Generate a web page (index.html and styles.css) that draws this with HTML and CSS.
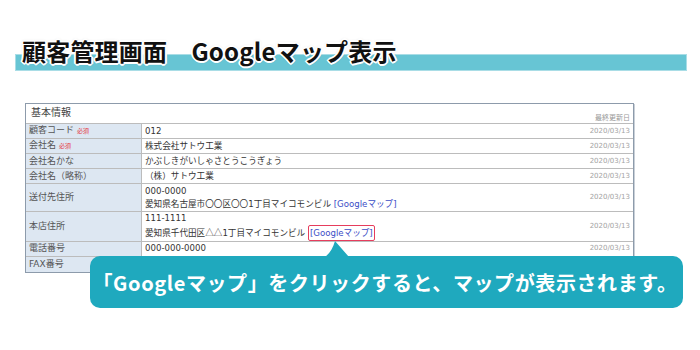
FILE: index.html
```html
<!DOCTYPE html>
<html lang="ja">
<head>
<meta charset="utf-8">
<title>顧客管理画面 Googleマップ表示</title>
<link rel="stylesheet" href="styles.css">
</head>
<body>

<h1 class="page-title">顧客管理画面　Googleマップ表示</h1>

<div class="panel">
  <table class="info">
    <tr class="head">
      <td colspan="3">
        <div class="head-inner">
          <span class="head-text">基本情報</span>
          <span class="head-date">最終更新日</span>
        </div>
      </td>
    </tr>
    <tr>
      <th>顧客コード <span class="req">必須</span></th>
      <td>012</td>
      <td class="date">2020/03/13</td>
    </tr>
    <tr>
      <th>会社名 <span class="req">必須</span></th>
      <td>株式会社サトウ工業</td>
      <td class="date">2020/03/13</td>
    </tr>
    <tr>
      <th>会社名かな</th>
      <td>かぶしきがいしゃさとうこうぎょう</td>
      <td class="date">2020/03/13</td>
    </tr>
    <tr>
      <th>会社名（略称）</th>
      <td>（株）サトウ工業</td>
      <td class="date">2020/03/13</td>
    </tr>
    <tr class="addr addr1">
      <th>送付先住所</th>
      <td>000-0000<br>愛知県名古屋市<span class="cjk">〇〇</span>区<span class="cjk">〇〇</span>1丁目マイコモンビル <a href="#">[Googleマップ]</a></td>
      <td class="date">2020/03/13</td>
    </tr>
    <tr class="addr addr2">
      <th>本店住所</th>
      <td>111-1111<br>愛知県千代田区<span class="cjk">△△</span>1丁目マイコモンビル <a href="#" class="marked">[Googleマップ]</a></td>
      <td class="date">2020/03/13</td>
    </tr>
    <tr>
      <th>電話番号</th>
      <td>000-000-0000</td>
      <td class="date">2020/03/13</td>
    </tr>
    <tr>
      <th>FAX番号</th>
      <td></td>
      <td class="date">2020/03/13</td>
    </tr>
  </table>
</div>

<div class="note">
  <svg class="note-tail" width="26" height="16" viewBox="0 0 26 16">
    <path d="M1 16 C6 12 9 7 11 0 L25 16 Z" fill="#1fa9be"/>
  </svg>
  <p>「Googleマップ」をクリックすると、マップが表示されます。</p>
</div>

</body>
</html>
```

FILE: styles.css
```css
body {
  margin: 0;
  padding-top: 34px;
  background-color: white;
  font-family: "DejaVu Sans", "Noto Sans CJK JP", sans-serif;
}

.page-title {
  margin: 0 13px 0 15px;
  padding-left: 7px;
  height: 37px;
  line-height: 34px;
  font-family: "Noto Sans CJK JP", sans-serif;
  font-size: 24px;
  font-weight: bold;
  color: #111;
  letter-spacing: 0.2px;
  background:
    linear-gradient(transparent 21px, #67c5d4 21px) 1px 0 / calc(100% - 2px) calc(100% - 1px) no-repeat,
    linear-gradient(transparent 20px, #a9dde6 20px);
  text-shadow:
    1px 1px 0 #fff, -1px -1px 0 #fff, 1px -1px 0 #fff, -1px 1px 0 #fff,
    2px 0 0 #fff, -2px 0 0 #fff, 0 2px 0 #fff, 0 -2px 0 #fff,
    0 0 3px rgba(0, 0, 0, 0.35);
}

.panel {
  margin: 32px 0 0 25px;
  width: 607px;
  border: 1px solid #8d9bab;
  box-shadow: 1px 1px 0 #c9d0d8;
}

.info {
  width: 100%;
  border-collapse: collapse;
  font-size: 8.6px;
  color: #333;
}
.info th, .info td {
  padding: 0 3px;
  height: 14px;
  line-height: 12.5px;
  border-bottom: 1px solid #bcbcbc;
  vertical-align: middle;
}
.info tr:last-child th, .info tr:last-child td { border-bottom: none; height: 15px; }
.info th {
  width: 109px;
  text-align: left;
  font-weight: normal;
  font-size: 9px;
  color: #555;
  background-color: #dde7f2;
  border-right: 1px solid #bcbcbc;
}
.info td.date {
  text-align: right;
  font-size: 7px;
  color: #a3a3a3;
  width: 60px;
}
.req {
  font-size: 6px;
  color: #e5333f;
}
.cjk {
  font-family: "Noto Sans CJK JP", sans-serif;
}

.info tr.head td {
  height: 19px;
  padding: 0;
}
.head-inner {
  display: flex;
  justify-content: space-between;
  align-items: flex-end;
  padding: 0 3px 0 5px;
}
.head-text {
  font-size: 10px;
  color: #444;
  line-height: 15px;
  padding-bottom: 3px;
}
.head-date {
  font-size: 7px;
  color: #999;
  line-height: 9px;
}

.info tr.addr1 th, .info tr.addr1 td { height: 27px; }
.info tr.addr2 th, .info tr.addr2 td { height: 25px; }

.info a {
  color: #3a4dc6;
  text-decoration: none;
}
.info a.marked {
  display: inline-block;
  line-height: 12px;
  padding: 1px;
  border: 1.5px solid #e63d5d;
  border-radius: 2px;
}

.note {
  position: absolute;
  left: 90px;
  top: 256px;
  width: 593px;
  height: 52px;
  border-radius: 10px;
  background-color: #1fa9be;
  display: flex;
  align-items: center;
  justify-content: center;
}
.note-tail {
  position: absolute;
  left: 234px;
  top: -15px;
}
.note p {
  margin: 0 0 0 -3px;
  font-family: "Noto Sans CJK JP", sans-serif;
  font-weight: bold;
  font-size: 20px;
  color: white;
  letter-spacing: 0.6px;
}
```
